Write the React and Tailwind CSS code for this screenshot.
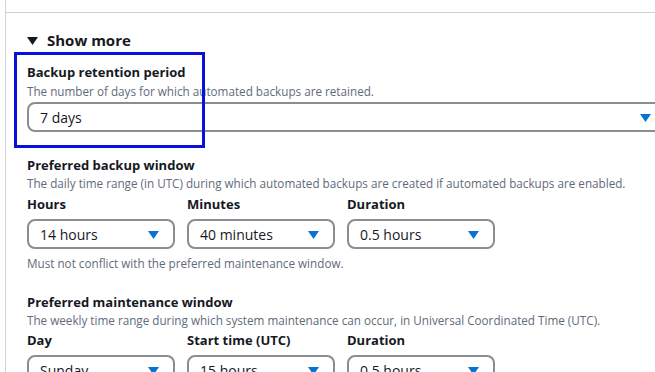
import clsx from 'clsx'

const FONT = "font-['Open_Sans','Noto_Sans',sans-serif]"

function Caret({ className }) {
  return (
    <svg width="11" height="8" viewBox="0 0 11 8" className={className}>
      <polygon points="0,0 11,0 5.5,8" fill="currentColor" />
    </svg>
  )
}

function Select({ value, className }) {
  return (
    <div className={clsx(
      'h-[30px] shrink-0 rounded-[8px] border-2 border-[#8c8c94] bg-white pl-[11px] pr-[14px] flex items-center justify-between',
      className,
    )}>
      <span className="text-[14px] text-[#16191f]">{value}</span>
      <Caret className="text-[#0972d3] mt-[1px]" />
    </div>
  )
}

function Label({ children, className }) {
  return <div className={clsx('text-[13px] leading-[18px] font-bold text-[#16191f]', className)}>{children}</div>
}

function Hint({ children, className }) {
  return <div className={clsx('text-[11.7px] leading-[18px] text-[#5f6b7a]', className)}>{children}</div>
}

function Field({ label, value }) {
  return (
    <div className="flex flex-col">
      <Label>{label}</Label>
      <Select value={value} className="w-[148px] mt-[6px]" />
    </div>
  )
}

export default function App() {
  return (
    <div className={clsx('w-[655px] h-[372px] overflow-hidden bg-white', FONT)}>
      <div className="ml-[5px] h-full border-l border-[#d5d5d5]">
        <div className="h-[13px] border-b border-[#cfcfcf]" />

        <div className="pl-[21px] w-[700px]">
          {/* Expander */}
          <div className="mt-[17px] flex items-center gap-[9px] h-[20px]">
            <Caret className="text-[#16191f] mt-[1px]" />
            <span className="text-[15px] font-bold text-[#16191f]">Show more</span>
          </div>

          {/* Backup retention */}
          <div className="relative mt-[13px]">
            <div className="absolute -left-[13px] -top-[11px] w-[191px] h-[96px] border-[3px] border-[#0a10dc] pointer-events-none z-10" />
            <Label>Backup retention period</Label>
            <Hint className="leading-[16px] mt-[1px]">The number of days for which automated backups are retained.</Hint>
            <Select value="7 days" className="w-[640px] mt-[2px]" />
          </div>

          {/* Backup window */}
          <Label className="mt-[24px]">Preferred backup window</Label>
          <Hint>The daily time range (in UTC) during which automated backups are created if automated backups are enabled.</Hint>
          <div className="mt-[3px] flex gap-[12px]">
            <Field label="Hours" value="14 hours" />
            <Field label="Minutes" value="40 minutes" />
            <Field label="Duration" value="0.5 hours" />
          </div>
          <Hint className="leading-[16px] mt-[5px]">Must not conflict with the preferred maintenance window.</Hint>

          {/* Maintenance window */}
          <Label className="mt-[21px]">Preferred maintenance window</Label>
          <Hint>The weekly time range during which system maintenance can occur, in Universal Coordinated Time (UTC).</Hint>
          <div className="mt-[2px] flex gap-[12px]">
            <Field label="Day" value="Sunday" />
            <Field label="Start time (UTC)" value="15 hours" />
            <Field label="Duration" value="0.5 hours" />
          </div>
        </div>
      </div>
    </div>
  )
}
